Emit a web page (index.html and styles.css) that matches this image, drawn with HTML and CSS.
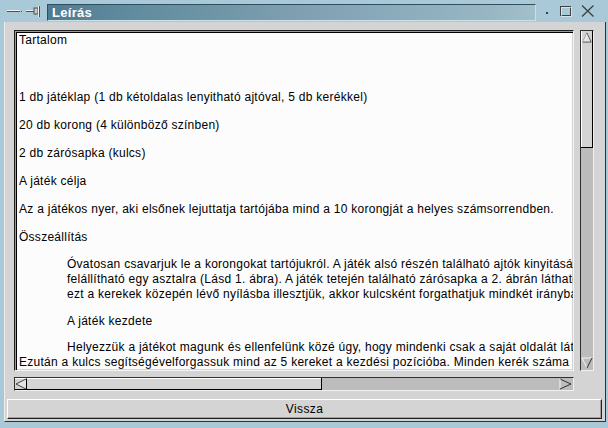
FILE: index.html
```html
<!DOCTYPE html>
<html lang="hu">
<head>
<meta charset="utf-8">
<title>Leírás</title>
<link rel="stylesheet" href="styles.css">
</head>
<body>
<div class="frame">
  <div class="titlebar">
    <svg class="ic-min" width="15" height="4" viewBox="0 0 15 4"><rect x="0" y="0" width="13" height="1" fill="#f0f0f0"/><rect x="0" y="1" width="13" height="1" fill="#505050"/><rect x="14" y="1" width="1" height="1" fill="#505050"/></svg>
    <svg class="ic-pin" width="15" height="11" viewBox="0 0 15 11"><rect x="0" y="4" width="8" height="1" fill="#f0f0f0"/><rect x="0" y="5" width="8" height="1" fill="#505050"/><rect x="8" y="2" width="4" height="6" fill="#c8c8c8" stroke="#505050" stroke-width="1"/><rect x="13" y="0" width="1" height="11" fill="#505050"/><rect x="12" y="0" width="1" height="11" fill="#f0f0f0"/></svg>
    <div class="title">Leírás</div>
    <span class="ic-dot"></span>
    <svg class="ic-max" width="12" height="11" viewBox="0 0 12 11"><rect x="0.5" y="0.5" width="10" height="9" fill="none" stroke="#404040"/><rect x="1.5" y="1.5" width="10" height="9" fill="none" stroke="#e8f0f4" opacity="0.7"/></svg>
    <svg class="ic-close" width="14" height="12" viewBox="0 0 14 12"><path d="M1 0.5 L12.5 11.5 M12.5 0.5 L1 11.5" stroke="#404040" stroke-width="1.3" fill="none"/></svg>
  </div>
  <div class="body">
    <div class="viewer">
      <div class="textrow">
        <div class="text">
          <p class="sec">Tartalom</p>
          <p class="sec gap">&nbsp;</p>
          <p class="sec">1 db játéklap (1 db kétoldalas lenyitható ajtóval, 5 db kerékkel)</p>
          <p class="sec">20 db korong (4 különböző színben)</p>
          <p class="sec">2 db zárósapka (kulcs)</p>
          <p class="sec">A játék célja</p>
          <p class="sec">Az a játékos nyer, aki elsőnek lejuttatja tartójába mind a 10 korongját a helyes számsorrendben.</p>
          <p class="sec s-head">Összeállítás</p>
          <p class="ind s-para">Óvatosan csavarjuk le a korongokat tartójukról. A játék alsó részén található ajtók kinyitásával a játék<br>felállítható egy asztalra (Lásd 1. ábra). A játék tetején található zárósapka a 2. ábrán látható módon<br>ezt a kerekek közepén lévő nyílásba illesztjük, akkor kulcsként forgathatjuk mindkét irányba.</p>
          <p class="ind s-head2">A játék kezdete</p>
          <p class="last"><span class="first">Helyezzük a játékot magunk és ellenfelünk közé úgy, hogy mindenki csak a saját oldalát láthassa.</span><br>Ezután a kulcs segítségévelforgassuk mind az 5 kereket a kezdési pozícióba. Minden kerék száma</p>
        </div>
        <div class="vscroll">
          <div class="vthumb">
            <svg width="12" height="13" viewBox="0 0 12 13"><path d="M1 12 L6 1 L11 12 Z" fill="#e4e4e4" stroke="#404040" stroke-width="1"/><path d="M1.5 11.5 L6 2" stroke="#ffffff" stroke-width="1"/></svg>
          </div>
          <div class="vtrough"></div>
          <div class="vdown">
            <svg width="12" height="12" viewBox="0 0 12 12"><path d="M1 1 L11 1" stroke="#f4f4f4"/><path d="M1 1 L6 11" stroke="#f4f4f4"/><path d="M11 1 L6 11" stroke="#303030"/></svg>
          </div>
        </div>
      </div>
      <div class="hscroll">
        <div class="hthumb">
          <svg width="12" height="12" viewBox="0 0 12 12"><path d="M11 1 L1 6 L11 11" fill="#e4e4e4" stroke="#404040"/><path d="M11.5 0.5 L11.5 11.5" stroke="#000"/></svg>
        </div>
        <div class="htrough"></div>
        <div class="hright">
          <svg width="13" height="12" viewBox="0 0 13 12"><path d="M1 1 L12 6" stroke="#303030"/><path d="M1 1 L1 11" stroke="#f4f4f4"/><path d="M1 11 L12 6" stroke="#303030"/></svg>
        </div>
      </div>
    </div>
    <button class="btn" type="button">Vissza</button>
  </div>
</div>
</body>
</html>
```
FILE: styles.css
```css
html, body {
  margin: 0;
  padding: 0;
}
body {
  width: 608px;
  height: 428px;
  overflow: hidden;
  background: #a9c9d8;
  font-family: "Liberation Sans", Arial, sans-serif;
}
.frame {
  width: 608px;
  height: 428px;
  display: flex;
  flex-direction: column;
  background: #a9c9d8;
}
.titlebar {
  height: 22px;
  display: flex;
  align-items: center;
  flex-shrink: 0;
}
.ic-min {
  margin-left: 7px;
  margin-top: 2px;
}
.ic-pin {
  margin-left: 4px;
}
.title {
  margin-left: 6px;
  margin-top: 4px;
  align-self: flex-start;
  width: 483px;
  height: 15px;
  border: 1px solid;
  border-color: #2f4f5e #c9e1eb #c9e1eb #2f4f5e;
  background: linear-gradient(to right, #4f7b90 0%, #5f8a9e 15%, #6f96a6 35%, #7f9fb0 50%, #8aabbb 70%, #98b5c3 90%, #a2bfcb 100%);
  color: #ffffff;
  font-weight: bold;
  font-size: 13px;
  letter-spacing: 0.3px;
  line-height: 15px;
  padding-left: 4px;
  box-sizing: content-box;
}
.ic-dot {
  width: 2px;
  height: 2px;
  background: #404040;
  margin-left: 10px;
  margin-top: 3px;
}
.ic-max {
  margin-left: 12px;
}
.ic-close {
  margin-left: 9px;
}
.body {
  margin: 0 2px 0 4px;
  height: 400px;
  background: #d4d4d4;
  border-left: 1px solid #ececec;
  border-right: 1px solid #303030;
  border-bottom: 1px solid #303030;
  box-sizing: border-box;
  display: flex;
  flex-direction: column;
}
.viewer {
  margin: 8px 10px 0 9px;
  display: flex;
  flex-direction: column;
  gap: 6px;
}
.textrow {
  display: flex;
  gap: 6px;
  height: 341px;
}
.text {
  width: 560px;
  height: 341px;
  box-sizing: border-box;
  background: #fcfcfc;
  border: 1px solid;
  border-color: #202020 #f4f4f4 #f4f4f4 #202020;
  box-shadow: inset 1px 1px 0 #9a9a9a, inset 2px 2px 0 #000000, inset -1px -1px 0 #d4d4d4;
  overflow: hidden;
  white-space: nowrap;
  padding: 2px 0 0 4px;
  font-size: 12px;
  letter-spacing: 0.27px;
  line-height: 15px;
  color: #000000;
}
.text p {
  margin: 0;
}
.text .sec {
  margin-bottom: 13px;
}
.text .gap {
  margin-bottom: 14px;
}
.text .s-head {
  margin-bottom: 12px;
}
.text .ind {
  padding-left: 48px;
}
.text .s-para {
  margin-bottom: 12px;
}
.text .s-head2 {
  margin-bottom: 11px;
}
.text .first {
  padding-left: 48px;
}
.vscroll {
  width: 14px;
  height: 341px;
  box-sizing: border-box;
  border: 1px solid;
  border-color: #303030 #f0f0f0 #f0f0f0 #303030;
  background: #bcbcbc;
  display: flex;
  flex-direction: column;
}
.vthumb {
  height: 117px;
  box-sizing: border-box;
  background: #d4d4d4;
  border-right: 1px solid #000;
  border-bottom: 1px solid #000;
  box-shadow: inset 1px 0 0 #ffffff;
  display: flex;
  justify-content: center;
}
.vthumb svg {
  margin-left: 1px;
}
.vtrough {
  flex: 1;
}
.vdown {
  height: 13px;
  display: flex;
  justify-content: center;
  align-items: flex-start;
}
.hscroll {
  width: 560px;
  height: 14px;
  box-sizing: border-box;
  border: 1px solid;
  border-color: #303030 #f0f0f0 #f0f0f0 #303030;
  background: #bcbcbc;
  display: flex;
}
.hthumb {
  width: 307px;
  box-sizing: border-box;
  background: #d4d4d4;
  border-right: 1px solid #000;
  border-bottom: 1px solid #000;
  box-shadow: inset 0 1px 0 #ffffff;
  display: flex;
  align-items: center;
}
.htrough {
  flex: 1;
}
.hright {
  width: 14px;
  display: flex;
  align-items: center;
}
.btn {
  margin: 8px 3px 2px 2px;
  height: 21px;
  box-sizing: border-box;
  background: #d4d4d4;
  border: 1px solid;
  border-color: #ffffff #202020 #202020 #ffffff;
  box-shadow: inset -1px -1px 0 #a0a0a0;
  font-family: "Liberation Sans", Arial, sans-serif;
  font-size: 12px;
  letter-spacing: 0.4px;
  color: #000;
  padding: 0;
}
```
